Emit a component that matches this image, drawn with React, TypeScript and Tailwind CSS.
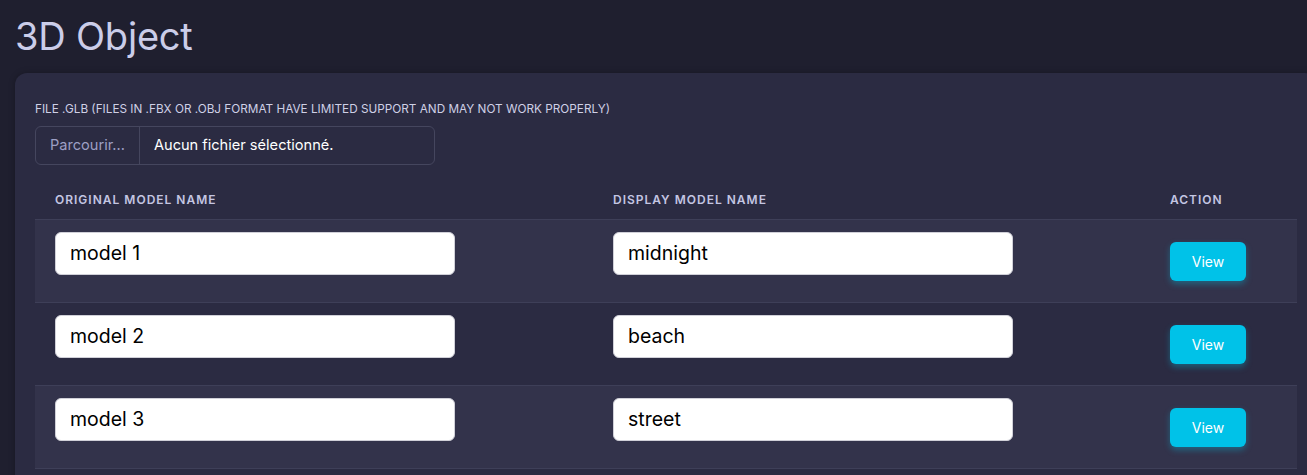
import React from "react";

const rows = [
  { orig: "model 1", disp: "midnight" },
  { orig: "model 2", disp: "beach" },
  { orig: "model 3", disp: "street" },
];

export default function App() {
  return (
    <div
      className="w-[1307px] h-[475px] overflow-hidden bg-[#1f1f2f]"
      style={{ fontFamily: "Inter, 'Noto Sans', sans-serif" }}
    >
      <div className="pl-[15px] pt-[12px]">
        <h1 className="text-[38px] leading-[48px] text-[#cbcde9] font-normal tracking-[-0.2px]">
          3D Object
        </h1>
        <div className="mt-[13px] w-[1302px] rounded-t-[12px] bg-[#2b2b42] px-[20px] pt-[28px] pb-[20px] shadow-[0_0_6px_rgba(0,0,0,0.25)]">
          <div className="text-[11.75px] leading-[16px] uppercase text-[#cfd0e6]">
            File .glb (files in .fbx or .obj format have limited support and may not work properly)
          </div>
          <div className="mt-[9px] flex h-[39px] w-[400px] items-stretch rounded-[6px] border border-[#45465e] text-[14.6px]">
            <div className="flex items-center border-r border-[#45465e] px-[14px] text-[#9d9fc4]">
              Parcourir...
            </div>
            <div className="flex items-center pl-[14px] text-white">Aucun fichier sélectionné.</div>
          </div>
          <div className="mt-[15px] w-[1262px]">
            <div className="grid h-[40px] grid-cols-[558px_557px_147px] items-center border-b border-[#3e3f58] text-[12px] font-semibold uppercase tracking-[1px] text-[#c4c6e2]">
              <div className="pl-[20px]">Original Model Name</div>
              <div className="pl-[20px]">Display Model Name</div>
              <div className="pl-[20px]">Action</div>
            </div>
            {rows.map((r, i) => (
              <div
                key={r.orig}
                className={
                  "grid h-[83px] grid-cols-[558px_557px_147px] items-center border-b border-[#3e3f58] " +
                  (i % 2 === 0 ? "bg-[#33334b]" : "bg-[#2b2b42]")
                }
              >
                <div className="pl-[20px]">
                  <input
                    defaultValue={r.orig}
                    className="mb-[16px] h-[43px] w-[400px] rounded-[6px] border border-[#d0d0d8] bg-white pl-[14px] text-[19.5px] text-black outline-none"
                  />
                </div>
                <div className="pl-[20px]">
                  <input
                    defaultValue={r.disp}
                    className="mb-[16px] h-[43px] w-[400px] rounded-[6px] border border-[#d0d0d8] bg-white pl-[14px] text-[19.5px] text-black outline-none"
                  />
                </div>
                <div className="pl-[20px]">
                  <button className="h-[39px] w-[76px] rounded-[6px] bg-[#00c2e8] text-[14px] text-white shadow-[0_3px_6px_rgba(0,194,232,0.35)]">
                    View
                  </button>
                </div>
              </div>
            ))}
          </div>
        </div>
      </div>
    </div>
  );
}
